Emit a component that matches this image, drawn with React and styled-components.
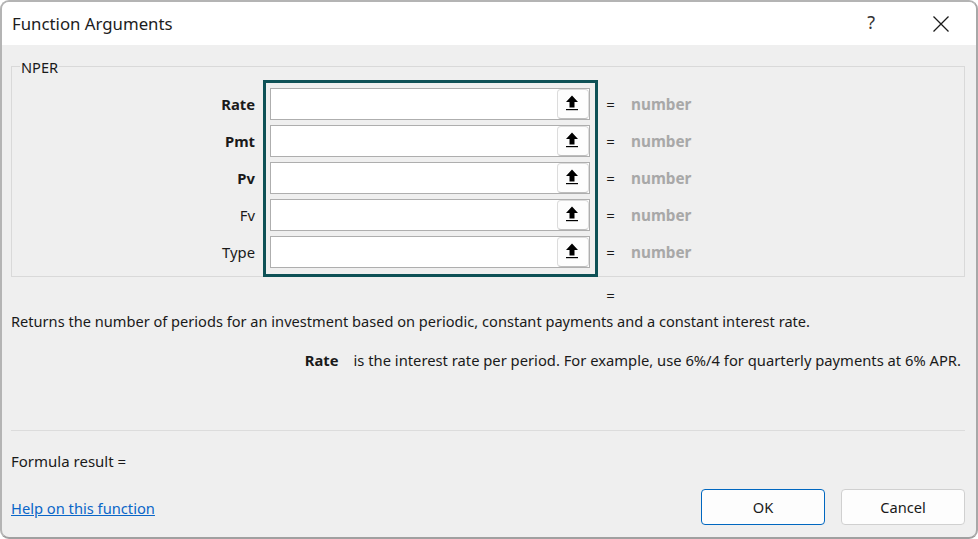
import React from "react"
import styled, { createGlobalStyle } from "styled-components"

const GlobalStyle = createGlobalStyle`
    html, body {
        margin: 0;
        padding: 0;
        background: #fff;
    }
    body {
        font-family: "Noto Sans", "Open Sans", sans-serif;
        color: #1a1a1a;
    }
`

const Window = styled.div`
    box-sizing: border-box;
    width: 978px;
    height: 539px;
    border: 2px solid #b4b4b4;
    border-bottom-color: #a0a0a0;
    border-right-color: #a8a8a8;
    border-radius: 9px;
    background: #efefef;
    overflow: hidden;
    display: flex;
    flex-direction: column;
`

const TitleBar = styled.div`
    height: 43px;
    flex: none;
    background: #fff;
    display: flex;
    align-items: center;
    padding: 0 27px 0 10px;
`

const Title = styled.div`
    flex: 1;
    font-size: 16.8px;
    color: #1c1c1c;
`

const HelpMark = styled.span`
    font-size: 18px;
    color: #333;
    margin-right: 58px;
    margin-top: -4px;
`

const Body = styled.div`
    flex: 1;
    display: flex;
    flex-direction: column;
    padding: 21px 11px 0 9px;
`

const Group = styled.div`
    position: relative;
    box-sizing: border-box;
    height: 211px;
    border: 1px solid #d9d9d9;
    padding-top: 13px;
    display: flex;
    align-items: flex-start;
`

const Legend = styled.span`
    position: absolute;
    left: 8px;
    top: -9px;
    padding: 0 1px;
    font-size: 14.6px;
    line-height: 18px;
    background: #efefef;
`

const Labels = styled.div`
    box-sizing: border-box;
    width: 251px;
    padding: 8px 8px 0 0;
    display: flex;
    flex-direction: column;
    gap: 5px;
`

const Label = styled.div`
    height: 32px;
    line-height: 32px;
    text-align: right;
    font-size: 14.8px;
    font-weight: ${(p) => (p.$required ? 700 : 400)};
`

const Highlight = styled.div`
    box-sizing: border-box;
    width: 335px;
    height: 197px;
    flex: none;
    border: 3px solid #0e5156;
    padding: 5px 5px 0 4px;
    display: flex;
    flex-direction: column;
    gap: 5px;
`

const Field = styled.div`
    box-sizing: border-box;
    height: 32px;
    border: 1px solid #aeaeae;
    background: #fff;
    display: flex;
    justify-content: flex-end;
`

const PickButton = styled.div`
    box-sizing: border-box;
    width: 32px;
    height: 30px;
    padding-right: 2px;
    background: #fdfdfd;
    border: 1px solid #dcdcdc;
    border-bottom-color: #bdbdbd;
    border-radius: 4px;
    display: flex;
    align-items: center;
    justify-content: center;
`

const Results = styled.div`
    padding: 8px 0 0 0;
    display: flex;
    flex-direction: column;
    gap: 5px;
`

const ResultRow = styled.div`
    height: 32px;
    display: flex;
    align-items: center;
    font-size: 15px;
`

const Equals = styled.span`
    width: 25px;
    margin-right: 8px;
    text-align: center;
`

const Placeholder = styled.span`
    font-weight: 700;
    font-size: 15.3px;
    color: #a8a8a8;
`

const TotalEquals = styled.div`
    margin: 9px 0 0 587px;
    width: 25px;
    text-align: center;
    font-size: 15px;
    line-height: 18px;
`

const Description = styled.div`
    margin: 7px 0 0 0;
    font-size: 14.6px;
    line-height: 20px;
    white-space: nowrap;
`

const ArgHelp = styled.div`
    margin-top: 19px;
    display: flex;
    justify-content: flex-end;
    gap: 15px;
    padding-right: 4px;
    font-size: 14.75px;
    line-height: 20px;
    white-space: nowrap;
`

const ArgName = styled.b`
    font-weight: 700;
`

const Divider = styled.div`
    margin-top: 60px;
    height: 1px;
    background: #dcdcdc;
`

const FormulaResult = styled.div`
    margin: 20px 0 0 0;
    font-size: 15px;
    line-height: 20px;
`

const Footer = styled.div`
    margin-top: 18px;
    display: flex;
    align-items: center;
    gap: 16px;
`

const HelpLink = styled.a`
    flex: 1;
    margin-top: 2px;
    font-size: 14.7px;
    color: #0a66c8;
    text-decoration: underline;
`

const Button = styled.button`
    box-sizing: border-box;
    width: 124px;
    height: 36px;
    background: #fdfdfd;
    border: 1px solid ${(p) => (p.$primary ? "#0067c0" : "#d0d0d0")};
    border-radius: 4px;
    font-family: inherit;
    font-size: 14.65px;
    color: #1a1a1a;
`

const UploadIcon = () => (
    <svg width="14" height="16" viewBox="0 0 14 16" style={{ marginTop: -2 }}>
        <path d="M7 0.5 L13 7 L9.5 7 L9.5 12.5 L4.5 12.5 L4.5 7 L1 7 Z" fill="#000" />
        <rect x="1" y="14" width="12" height="1.2" fill="#000" />
    </svg>
)

const CloseIcon = () => (
    <svg width="16" height="16" viewBox="0 0 16 16">
        <path d="M0.5 0.5 L15.5 15.5 M15.5 0.5 L0.5 15.5" stroke="#1a1a1a" strokeWidth="1.3" fill="none" />
    </svg>
)

const args = [
    { name: "Rate", required: true },
    { name: "Pmt", required: true },
    { name: "Pv", required: true },
    { name: "Fv" },
    { name: "Type" },
]

const App = () => {
    return (
        <>
            <GlobalStyle />
            <Window>
                <TitleBar>
                    <Title>Function Arguments</Title>
                    <HelpMark>?</HelpMark>
                    <CloseIcon />
                </TitleBar>
                <Body>
                    <Group>
                        <Legend>NPER</Legend>
                        <Labels>
                            {args.map((a) => (
                                <Label key={a.name} $required={a.required}>
                                    {a.name}
                                </Label>
                            ))}
                        </Labels>
                        <Highlight>
                            {args.map((a) => (
                                <Field key={a.name}>
                                    <PickButton>
                                        <UploadIcon />
                                    </PickButton>
                                </Field>
                            ))}
                        </Highlight>
                        <Results>
                            {args.map((a) => (
                                <ResultRow key={a.name}>
                                    <Equals>=</Equals>
                                    <Placeholder>number</Placeholder>
                                </ResultRow>
                            ))}
                        </Results>
                    </Group>
                    <TotalEquals>=</TotalEquals>
                    <Description>
                        Returns the number of periods for an investment based on periodic, constant payments and a constant interest rate.
                    </Description>
                    <ArgHelp>
                        <ArgName>Rate</ArgName>
                        <span>is the interest rate per period. For example, use 6%/4 for quarterly payments at 6% APR.</span>
                    </ArgHelp>
                    <Divider />
                    <FormulaResult>Formula result =</FormulaResult>
                    <Footer>
                        <HelpLink>Help on this function</HelpLink>
                        <Button $primary>OK</Button>
                        <Button>Cancel</Button>
                    </Footer>
                </Body>
            </Window>
        </>
    )
}

export default App
